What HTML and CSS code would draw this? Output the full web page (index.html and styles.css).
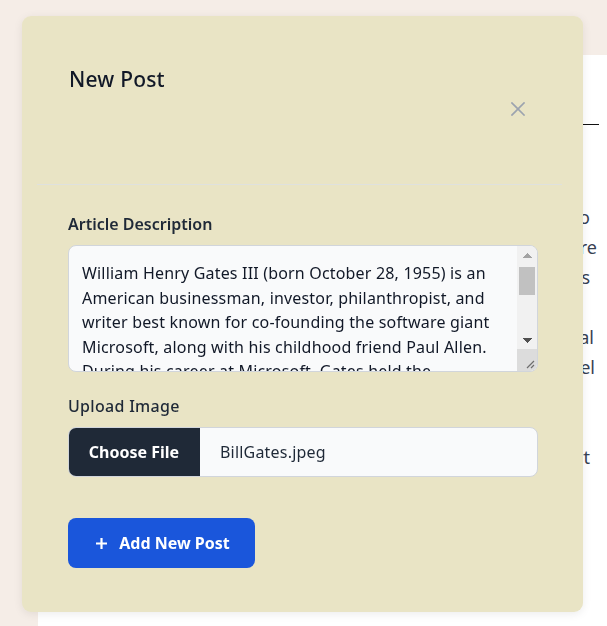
FILE: index.html
```html
<!DOCTYPE html>
<html>
<head>
<meta charset="utf-8">
<title>New Post</title>
<link rel="stylesheet" href="styles.css">
</head>
<body>
<div class="page">
  <div class="topbar"></div>
  <div class="row">
    <aside class="side"></aside>
    <main class="main">
      <div class="main-head"></div>
      <div class="article">
        <div class="ln e17">the company was into</div>
        <div class="ln e10">the products we are</div>
        <div class="ln e17">where he was</div>
        <div class="ln">&nbsp;</div>
        <div class="ln e13">with a personal</div>
        <div class="ln e12">on a high level</div>
        <div class="ln">&nbsp;</div>
        <div class="ln">&nbsp;</div>
        <div class="ln e17">at the start</div>
      </div>
    </main>
  </div>
</div>

<div class="modal">
  <div class="modal-head">
    <h2 class="modal-title">New Post</h2>
    <button class="close" type="button" aria-label="Close">
      <svg width="14" height="14" viewBox="0 0 14 14"><path d="M1 1L13 13M13 1L1 13" stroke="#9ca3af" stroke-width="1.7" stroke-linecap="square" fill="none"/></svg>
    </button>
  </div>
  <form class="modal-body">
    <label class="label" for="desc">Article Description</label>
    <div class="area-box">
      <textarea id="desc" class="area">William Henry Gates III (born October 28, 1955) is an American businessman, investor, philanthropist, and writer best known for co-founding the software giant Microsoft, along with his childhood friend Paul Allen. During his career at Microsoft, Gates held the positions of chairman, chief executive officer (CEO), president, and chief software architect, while also being its largest individual shareholder until May 2014.</textarea>
      <div class="sbar" aria-hidden="true">
        <div class="sb-btn sb-up"></div>
        <div class="sb-thumb"></div>
        <div class="sb-fill"></div>
        <div class="sb-btn sb-down"></div>
        <div class="sb-corner">
          <svg width="10" height="10" viewBox="0 0 10 10"><path d="M2 9L9 2M6 9L9 6" stroke="#6e6e6e" stroke-width="1.2" fill="none"/></svg>
        </div>
      </div>
    </div>
    <div class="label up">Upload Image</div>
    <div class="file">
      <span class="file-btn">Choose File</span>
      <span class="file-name">BillGates.jpeg</span>
    </div>
    <button class="add" type="button">
      <svg width="13" height="13" viewBox="0 0 13 13"><path d="M6.5 1V12M1 6.5H12" stroke="#fff" stroke-width="2.2" fill="none"/></svg>
      <span>Add New Post</span>
    </button>
  </form>
</div>
</body>
</html>
```
FILE: styles.css
```css
*{box-sizing:border-box}
html,body{margin:0;padding:0}
body{font-family:"Noto Sans","Open Sans",sans-serif;background:#f5ede7;height:626px;overflow:hidden}
.page{display:flex;flex-direction:column;height:626px}
.topbar{height:55px;background:#f5ede7}
.row{display:flex;flex:1}
.side{width:38px;background:#f5ede7}
.main{flex:1;background:#fff}
.main-head{height:70px;margin-right:8px;border-bottom:1px solid #111}
.article{padding-top:77px;font-size:18px;line-height:30px;color:#374151}
.ln{text-align:right;white-space:nowrap;overflow:hidden}
.e17{padding-right:17px}
.e10{padding-right:10px}
.e13{padding-right:13px}
.e12{padding-right:12px}

.modal{position:fixed;left:22px;top:16px;width:561px;height:596px;background:#e9e4c5;border-radius:9px;box-shadow:0 2px 10px rgba(0,0,0,.08)}
.modal-head{height:169px;margin:0 21px 0 15px;border-bottom:1px solid #dfe1de;display:flex;justify-content:space-between;align-items:flex-start;padding:0 37px 0 32px}
.modal-title{margin:0;padding-top:49px;font-size:21px;line-height:28px;font-weight:500;color:#111827;letter-spacing:.2px}
.close{margin-top:86px;padding:0;border:0;background:none;width:14px;height:14px;display:block}
.close svg{display:block}
.modal-body{display:flex;flex-direction:column;align-items:flex-start;padding:27px 45px 0 46px}
.label{font-size:16px;line-height:24px;font-weight:600;color:#1f2937;margin-bottom:9px}
.up{margin-top:22px;margin-bottom:9px;font-weight:500;letter-spacing:.3px}

.area-box{width:470px;height:127px;border:1px solid #d1d5db;border-radius:8px;background:#f9fafb;display:flex;overflow:hidden}
.area{flex:1;min-width:0;height:100%;padding:15px 12px 0 13px;border:0;background:transparent;font-family:inherit;font-size:16px;line-height:24.5px;letter-spacing:.18px;color:#111827;resize:none;overflow:hidden;display:block;margin:0;outline:none}
.sbar{width:20px;display:flex;flex-direction:column;background:#f1f1f1}
.sb-btn{height:18px;background-repeat:no-repeat;background-position:center;background-size:9px 5px}
.sb-up{background-image:conic-gradient(from 138deg at 50% 0,#a3a3a3 84deg,transparent 0)}
.sb-down{background-image:conic-gradient(from -42deg at 50% 100%,#505050 84deg,transparent 0)}
.sb-thumb{height:28px;margin:3px 2px 0 2px;background:#c1c1c1}
.sb-fill{flex:1}
.sb-corner{height:22px;background:#dcdcdc;display:flex;align-items:flex-end;justify-content:flex-end;padding:0 2px 2px 0}
.sb-corner svg{display:block}

.file{width:470px;height:50px;display:flex;align-items:stretch;border:1px solid #d1d5db;border-radius:8px;background:#f9fafb;overflow:hidden}
.file-btn{width:132px;margin:-1px 0 -1px -1px;background:#1f2937;color:#fff;font-weight:700;font-size:16px;display:flex;align-items:center;justify-content:center}
.file-name{display:flex;align-items:center;padding-left:20px;font-size:16px;color:#1f2937;letter-spacing:.2px}
.add{margin-top:41px;height:50px;width:187px;border:0;border-radius:8px;background:#1a56db;color:#fff;font-family:inherit;font-size:16px;font-weight:700;display:flex;align-items:center;justify-content:center;gap:11px;padding:0 0 0 2px}
.add svg{display:block}
```
